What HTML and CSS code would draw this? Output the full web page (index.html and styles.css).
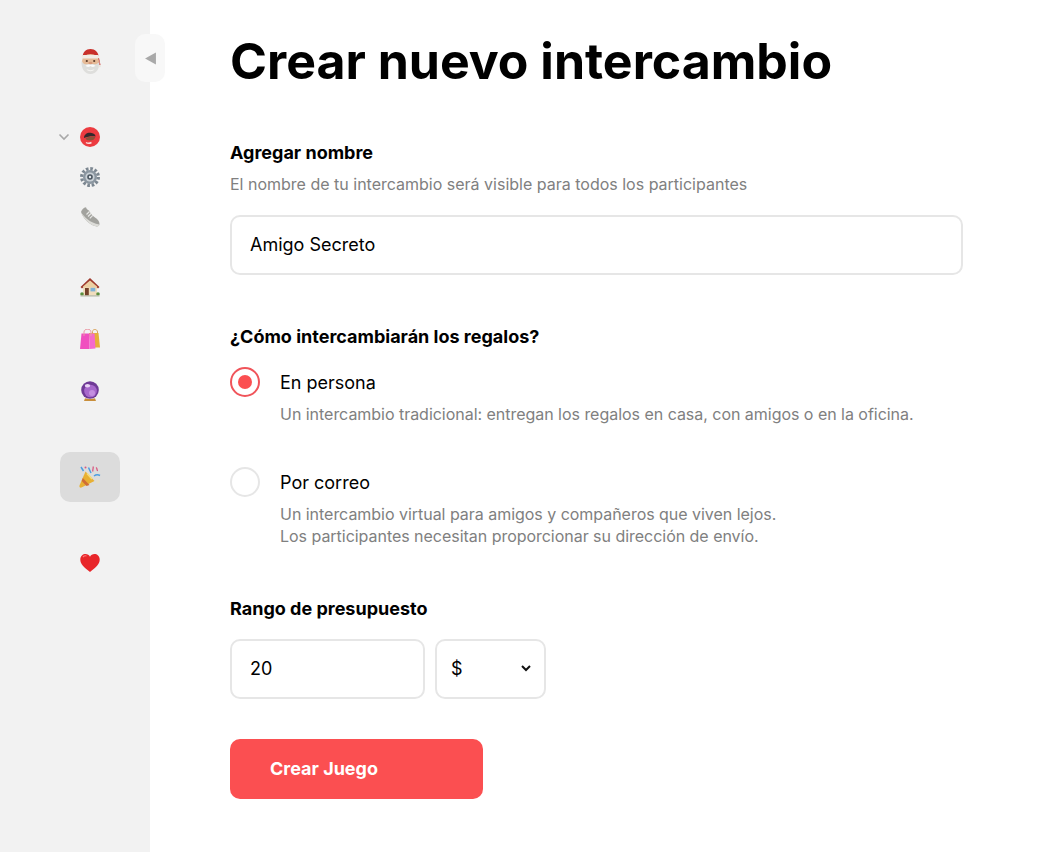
FILE: index.html
```html
<!DOCTYPE html>
<html lang="es">
<head>
<meta charset="UTF-8" />
<meta name="viewport" content="width=device-width, initial-scale=1" />
<title>Crear nuevo intercambio</title>
<link rel="stylesheet" href="styles.css">
</head>
<body>

<aside class="sidebar">
  <button class="collapse" aria-label="Colapsar">
    <svg width="11" height="13" viewBox="0 0 10 12"><path d="M10 0.500V11.500L0 6Z" fill="#a9a9a9"/></svg>
  </button>

  <a class="item">
    <svg class="emoji emoji-santa" viewBox="0 0 21 25">
      <path d="M2.500 9C2.500 3 6 0 10.500 0C15 0 18.500 3 19 9L20.500 16L18.500 16.500L17 10Z" fill="#c9302a"/>
      <ellipse cx="10.500" cy="12" rx="8.500" ry="7" fill="#e6bb98"/>
      <path d="M1.500 12C1 19 4.500 25 10.500 25C16.500 25 20 19 19.500 12C18 16 14 15.500 10.500 14.800C7 15.500 3 16 1.500 12Z" fill="#dededc"/>
      <path d="M5.500 16.500C8 15 13 15 15.500 16.500C14 18.500 12 18 10.500 17C9 18 7 18.500 5.500 16.500Z" fill="#fafafa"/>
      <path d="M6.500 20C8.500 21.500 12.500 21.500 14.500 20C13.500 23 7.500 23 6.500 20Z" fill="#f4f4f2"/>
      <rect x="1.500" y="6" width="18" height="3.600" rx="1.800" fill="#f2ece4"/>
      <circle cx="6.800" cy="12" r="1.100" fill="#5a3a28"/>
      <circle cx="14.200" cy="12" r="1.100" fill="#5a3a28"/>
      <ellipse cx="10.500" cy="14" rx="2.100" ry="1.200" fill="#d99b7c"/>
      <circle cx="19.700" cy="17" r="1.300" fill="#ece8e0"/>
    </svg>
  </a>

  <div class="group group-tight">
    <a class="item">
      <svg class="chevron" width="12" height="8" viewBox="0 0 12 8"><path d="M1.500 1.500L6 6L10.500 1.500" fill="none" stroke="#a8a8a8" stroke-width="1.600"/></svg>
      <svg class="emoji" viewBox="0 0 20 20">
        <circle cx="10" cy="10" r="10" fill="#ec3b40"/>
        <path d="M4 11C4 7.500 7 5.500 10.500 5.800C13.500 6 15.500 7.500 15.500 9.500C12.500 8.800 7.500 9.500 4 11Z" fill="#33292b"/>
        <path d="M5.500 11C8 9.900 12.500 9.500 15.300 10C15 12.500 12.500 13.500 10 13.500C7.500 13.500 6 12.800 5.500 11Z" fill="#8a5238"/>
        <path d="M6 15.500C7.500 16.500 9.500 16.500 11.500 15.500" fill="none" stroke="#f8dada" stroke-width="1.500"/>
      </svg>
    </a>
    <a class="item">
      <svg class="emoji" viewBox="0 0 20 20">
        <circle cx="10" cy="10" r="8.300" fill="none" stroke="#7c8791" stroke-width="3.400" stroke-dasharray="2.600 1.745"/>
        <circle cx="10" cy="10" r="7" fill="#8b96a0"/>
        <circle cx="10" cy="10" r="4.600" fill="#c9d0d6"/>
        <circle cx="10" cy="10" r="2.800" fill="#4a5560"/>
        <circle cx="10" cy="10" r="1.200" fill="#e2e6ea"/>
      </svg>
    </a>
    <a class="item">
      <svg class="emoji" viewBox="0 0 20 20">
        <path d="M1 5C1.500 3 3.500 0.500 6 0.300C6.500 2 7.500 3 9 3.500C10 6 12.500 8.500 15 10.500C17.500 12 19.500 14 19.500 17C19.500 19 17.500 20 15 19C9 17.500 3 11 1 5Z" fill="#a2a29e"/>
        <path d="M1 5C4 10 10 16 19.300 17.500C19 19.300 17.500 20 15 19C9 17.500 3 11 1 5Z" fill="#dcdcd8"/>
        <path d="M9.500 4.500L6.500 7.500M11 6.500L8 9.500M12.800 8.300L9.800 11.300" stroke="#e8e8e6" stroke-width="1.200"/>
      </svg>
    </a>
  </div>

  <div class="group group-wide">
    <a class="item">
      <svg class="emoji" viewBox="0 0 20 20">
        <rect x="3" y="8" width="14" height="10.500" fill="#f0ddbd"/>
        <path d="M0.500 10L10 1L19.500 10L18 11.500L10 4.300L2 11.500Z" fill="#9e3a2e"/>
        <path d="M3 9.500L10 3.500L17 9.500V10.500H3Z" fill="#ecd0a4"/>
        <rect x="5" y="11" width="3.800" height="7.500" fill="#74402a"/>
        <rect x="10.500" y="10.800" width="4.800" height="3.600" fill="#7fb2d8"/>
        <circle cx="2" cy="17" r="1.800" fill="#5a8e3e"/>
        <circle cx="18" cy="17" r="1.800" fill="#5a8e3e"/>
        <rect x="0.500" y="18.300" width="19" height="1.200" fill="#b4b6a4"/>
      </svg>
    </a>
    <a class="item">
      <svg class="emoji" viewBox="0 0 20 20">
        <path d="M9 4H18.500L20 18.500H11Z" fill="#e6ae3a"/>
        <path d="M1.500 4.500H9.500V20H0Z" fill="#f04fbf"/>
        <path d="M9.500 4.500H14.500L15.500 19.500L9.500 20Z" fill="#f56acb"/>
        <path d="M4 7V3C4 1 5.500 0.300 7.500 0.300C9.500 0.300 11 1 11 3V7" fill="none" stroke="#ea9aa6" stroke-width="1"/>
        <path d="M12.500 4V2.500C12.500 1 14 0.500 15 0.500C16 0.500 17.500 1.200 17.500 3V4" fill="none" stroke="#d9a35c" stroke-width="1"/>
      </svg>
    </a>
    <a class="item">
      <svg class="emoji" viewBox="0 0 20 20">
        <circle cx="10" cy="9" r="8.800" fill="#6f3a96"/>
        <circle cx="10.500" cy="10" r="6.300" fill="#a768cc"/>
        <circle cx="12" cy="12" r="3" fill="#c48fe0"/>
        <ellipse cx="7.500" cy="4.800" rx="2.700" ry="1.700" fill="#ead4f5"/>
        <path d="M5 17.300C7 18.300 13 18.300 15 17.300L16 20H4Z" fill="#c98f3c"/>
      </svg>
    </a>
  </div>

  <a class="item item-active">
    <svg class="emoji emoji-party" viewBox="0 0 22 22">
      <path d="M6.500 5.500L15.500 15L2.500 21.500C1 22 0 21 0.500 19.500Z" fill="#e8b033"/>
      <path d="M3.800 12L10.500 19L7.500 20L2.700 15Z" fill="#cf6d35"/>
      <path d="M8 7.500L13 13" stroke="#f6dc78" stroke-width="1.600"/>
      <path d="M9.500 1.500L12 7M15 10C17 8.500 19 8.500 21 9.500M2 1L4.500 5" fill="none" stroke="#4d9de0" stroke-width="1.500"/>
      <path d="M14 0.500C15 2.500 13 3.500 14 5.500M17 1.500C19 2.500 17 4.500 19 4.500" fill="none" stroke="#d9577f" stroke-width="1.300"/>
      <circle cx="19" cy="15.500" r="2" fill="#e4decd"/>
      <circle cx="6.500" cy="1.500" r="1" fill="#d9577f"/>
    </svg>
  </a>

  <a class="item item-heart">
    <svg class="emoji" viewBox="0 0 20 20">
      <path d="M10 19C4 14.500 0.300 11 0.300 6.500C0.300 3 3 1 5.500 1C7.500 1 9.200 2 10 3.800C10.800 2 12.500 1 14.500 1C17 1 19.700 3 19.700 6.500C19.700 11 16 14.500 10 19Z" fill="#e8262a"/>
      <path d="M3 4C4 2.800 5.500 2.600 6.500 3" fill="none" stroke="#ff7a7a" stroke-width="1.200"/>
    </svg>
  </a>
</aside>

<main class="content">
  <h1>Crear nuevo intercambio</h1>

  <form>
    <section class="field-name">
      <h2>Agregar nombre</h2>
      <p class="hint">El nombre de tu intercambio será visible para todos los participantes</p>
      <input class="text-input" type="text" value="Amigo Secreto" />
    </section>

    <section class="field-mode">
      <h2>¿Cómo intercambiarán los regalos?</h2>

      <label class="option option-first">
        <span class="radio radio-on"></span>
        <span class="option-text">
          <span class="option-title">En persona</span>
          <span class="hint">Un intercambio tradicional: entregan los regalos en casa, con amigos o en la oficina.</span>
        </span>
      </label>

      <label class="option">
        <span class="radio"></span>
        <span class="option-text">
          <span class="option-title">Por correo</span>
          <span class="hint">Un intercambio virtual para amigos y compañeros que viven lejos.<br>Los participantes necesitan proporcionar su dirección de envío.</span>
        </span>
      </label>
    </section>

    <section class="field-budget">
      <h2>Rango de presupuesto</h2>
      <div class="budget-row">
        <input class="text-input amount" type="text" value="20" />
        <div class="currency">
          <span>$</span>
          <svg width="10" height="7" viewBox="0 0 10 7"><path d="M1 1L5 5L9 1" fill="none" stroke="#111" stroke-width="2"/></svg>
        </div>
      </div>
    </section>

    <button class="submit" type="button">Crear Juego</button>
  </form>
</main>

</body>
</html>
```

FILE: styles.css
```css
* {
  box-sizing: border-box;
}

body {
  margin: 0;
  height: 852px;
  display: flex;
  overflow: hidden;
  background: #fff;
  color: #000;
  font-family: Inter, 'Noto Sans', sans-serif;
}

/* Sidebar with emoji links */
.sidebar {
  position: relative;
  width: 150px;
  flex-shrink: 0;
  padding: 36px 30px 0 60px;
  display: flex;
  flex-direction: column;
  background: #f2f2f2;
}

.collapse {
  position: absolute;
  top: 34px;
  left: 135px;
  width: 30px;
  height: 48px;
  padding: 0;
  display: flex;
  align-items: center;
  justify-content: center;
  border: none;
  border-radius: 10px;
  background: #f8f8f8;
}

.item {
  position: relative;
  width: 60px;
  height: 50px;
  display: flex;
  align-items: center;
  justify-content: center;
  border-radius: 10px;
}

.emoji {
  width: 20px;
  height: 20px;
}

.emoji-santa {
  width: 21px;
  height: 25px;
}

.emoji-party {
  width: 22px;
  height: 22px;
}

.chevron {
  position: absolute;
  left: -2px;
  top: 16px;
}

.group {
  display: flex;
  flex-direction: column;
}

.group-tight {
  margin-top: 31px;
}

.group-tight .item {
  height: 40px;
}

.group-wide {
  margin-top: 25px;
  gap: 2px;
}

.item-active {
  margin-top: 36px;
  background: #dcdcdc;
}

.item-heart {
  margin-top: 36px;
}

/* Form column */
.content {
  flex: 1;
  padding: 32px 80px 0;
}

h1 {
  margin: 0;
  font-size: 50px;
  line-height: 58px;
  font-weight: 700;
}

h2 {
  margin: 0;
  font-size: 18px;
  line-height: 22px;
  font-weight: 700;
}

.hint {
  display: block;
  margin: 0;
  font-size: 16px;
  line-height: 22px;
  color: #808080;
}

.field-name {
  margin-top: 52px;
}

.field-name .hint {
  margin-top: 9px;
}

.text-input {
  display: block;
  width: 100%;
  height: 60px;
  margin-top: 20px;
  padding: 0 18px 2px;
  border: 2px solid #e6e6e6;
  border-radius: 10px;
  outline: none;
  background: #fff;
  color: #000;
  font-family: inherit;
  font-size: 18px;
}

.field-mode {
  margin-top: 51px;
}

.option {
  display: flex;
  gap: 20px;
}

.option-first {
  margin-top: 20px;
  height: 100px;
}

.radio {
  width: 30px;
  height: 30px;
  margin-top: -1px;
  flex-shrink: 0;
  display: flex;
  align-items: center;
  justify-content: center;
  border: 2px solid #e6e6e6;
  border-radius: 50%;
  background: #fff;
}

.radio-on {
  border-color: #f0545a;
}

.radio-on::after {
  content: "";
  width: 14px;
  height: 14px;
  border-radius: 50%;
  background: #fb4f51;
}

.option-text {
  display: block;
}

.option-text .hint {
  letter-spacing: -0.03px;
}

.option-title {
  display: block;
  font-size: 18px;
  line-height: 30px;
  margin-bottom: 5px;
}

.field-budget {
  margin-top: 51px;
}

.budget-row {
  display: flex;
  gap: 10px;
}

.budget-row .text-input {
  margin-top: 19px;
}

.amount {
  width: 195px;
}

.currency {
  width: 111px;
  height: 60px;
  margin-top: 19px;
  padding: 0 13px 2px 14px;
  display: flex;
  align-items: center;
  justify-content: space-between;
  border: 2px solid #e6e6e6;
  border-radius: 10px;
  font-size: 18px;
}

.submit {
  display: block;
  width: 253px;
  height: 60px;
  margin-top: 40px;
  padding: 0 40px 2px;
  border: none;
  border-radius: 10px;
  background: #fb4f51;
  color: #fff;
  font-family: inherit;
  font-size: 18px;
  font-weight: 700;
  text-align: left;
}
```
